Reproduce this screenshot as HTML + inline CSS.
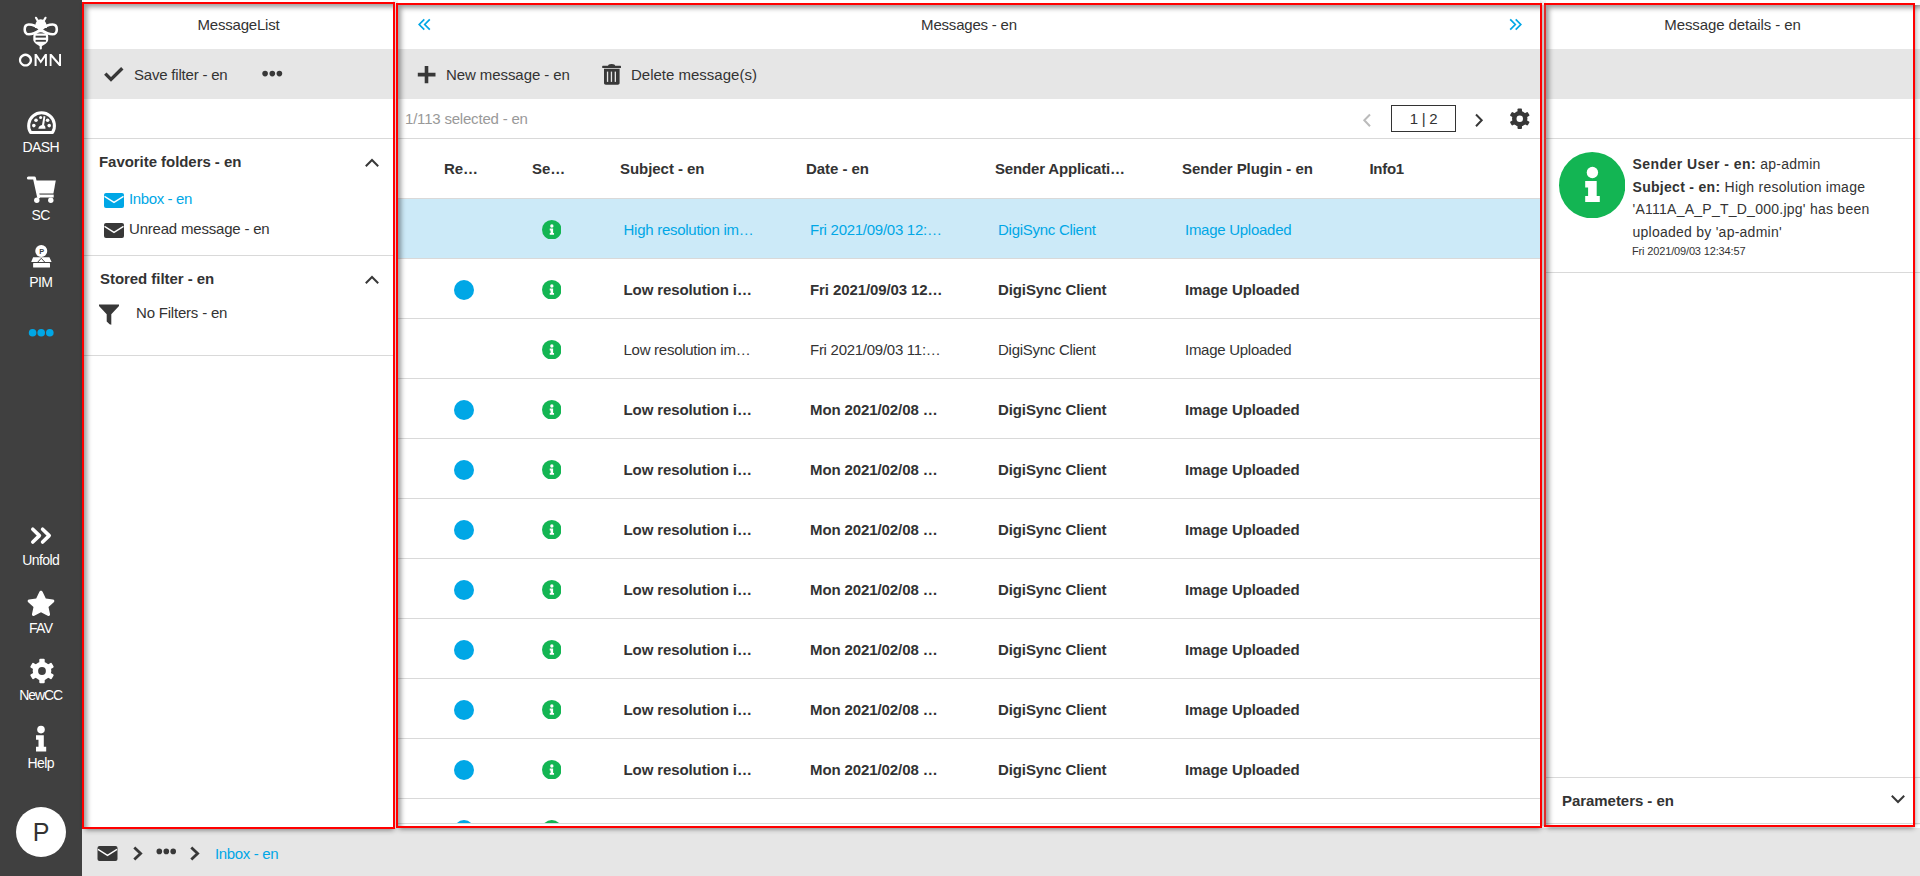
<!DOCTYPE html>
<html><head><meta charset="utf-8">
<style>
html,body{margin:0;padding:0;}
body{width:1920px;height:876px;position:relative;overflow:hidden;background:#fff;font-family:"Liberation Sans",sans-serif;color:#333;}
.a{position:absolute;display:block;}
.t{position:absolute;white-space:nowrap;font-size:15px;height:20px;line-height:20px;letter-spacing:-0.2px;}
.b{font-weight:bold;letter-spacing:-0.05px;}
.blue{color:#00a7e6;}
.lbl{position:absolute;left:0;width:82px;text-align:center;color:#fff;font-size:14px;line-height:20px;height:20px;white-space:nowrap;letter-spacing:-0.6px;text-indent:-0.6px;}
.panel{position:absolute;background:#fff;overflow:hidden;}
.shadow{position:absolute;box-shadow:1px 3px 5px rgba(0,0,0,.48);}
.insT{position:absolute;height:9px;background:linear-gradient(to bottom,rgba(0,0,0,.29) 0px,rgba(0,0,0,.26) 1px,rgba(0,0,0,.2) 2px,rgba(0,0,0,.14) 3px,rgba(0,0,0,.09) 4px,rgba(0,0,0,.05) 5px,rgba(0,0,0,.02) 6px,rgba(0,0,0,.005) 7px,rgba(0,0,0,0) 8px);}
.insL{position:absolute;width:9px;background:linear-gradient(to right,rgba(0,0,0,.31) 0px,rgba(0,0,0,.29) 1px,rgba(0,0,0,.23) 2px,rgba(0,0,0,.16) 3px,rgba(0,0,0,.105) 4px,rgba(0,0,0,.06) 5px,rgba(0,0,0,.028) 6px,rgba(0,0,0,.008) 7px,rgba(0,0,0,0) 8px);}
.ins{position:absolute;box-shadow:inset 3px 3px 5px rgba(0,0,0,.39);}
.tool{position:absolute;background:#e6e6e6;height:50px;top:49px;}
.hl{position:absolute;height:1px;background:#d9d9d9;}
.red{position:absolute;border:2px solid #f00;box-sizing:border-box;}
.dot{position:absolute;width:20px;height:20px;border-radius:50%;background:#00a7e6;}
</style></head>
<body>
<div class="a" style="left:0;top:0;width:82px;height:876px;background:#404040;"></div>
<div class="a" style="left:82px;top:828px;width:1838px;height:48px;background:#e6e6e6;"></div>

<svg class="a" style="left:0;top:0" width="82" height="876" viewBox="0 0 82 876">
<g fill="none" stroke="#fff">
  <path d="M36 17.8 L37.7 20.8 M45.5 17.8 L43.8 20.8" stroke-width="2.2" stroke-linecap="round"/>
  <path d="M40.75 29.6 C36 25.6 31.5 24.5 28.8 24.5 C25.8 24.5 24.7 27 24.7 29.4 C24.7 32 26.2 34.3 29 34.3 C32 34.3 36 32.6 40.75 29.6 C45.5 32.6 49.5 34.3 52.5 34.3 C55.3 34.3 56.8 32 56.8 29.4 C56.8 27 55.7 24.5 52.7 24.5 C50 24.5 45.5 25.6 40.75 29.6 Z" stroke-width="2.6"/>
 </g>
 <path d="M35 28 C35 22.5 37.5 19.3 40.75 19.3 C44 19.3 46.9 22.5 46.9 28 Z" fill="#fff"/>
 <path d="M40.75 30 C36.5 31 33.3 33 33.3 36.5 V39.5 C33.3 42.8 37.5 45 40.75 46.5 C44 45 48.2 42.8 48.2 39.5 V36.5 C48.2 33 45 31 40.75 30 Z" fill="#fff"/>
 <path d="M40.75 32.3 C38.5 32.8 37 33.3 36.5 33.6 H45 C44.5 33.3 43 32.8 40.75 32.3 Z" fill="#404040"/>
 <rect x="35.6" y="35.7" width="10.3" height="1.9" fill="#404040"/>
 <rect x="35.6" y="39.9" width="10.3" height="1.8" fill="#404040"/>
 <path d="M40.75 45 V48.5" stroke="#fff" stroke-width="2.2" stroke-linecap="round"/>
 <g fill="#fff">
  <path fill-rule="evenodd" d="M25.5 53.6 A6.6 6.5 0 1 1 25.49 53.6 Z M25.4 56.1 A4.3 4.05 0 1 0 25.41 56.1 Z"/>
  <path d="M34.6 66.1 V53.9 H36.6 L40.75 60.3 L45 53.9 H46.9 V66.1 H45 V57.4 L40.75 63.4 L36.6 57.4 V66.1 Z"/>
  <path d="M49.7 66.1 V53.9 H51.5 L59.1 62.8 V53.9 H61 V66.1 H59.2 L51.5 57.2 V66.1 Z"/>
 </g>

<path d="M30.55 132.4 A12.9 12.9 0 1 1 52.55 132.4 Z" fill="none" stroke="#fff" stroke-width="3" stroke-linejoin="round"/>
 <circle cx="33.8" cy="125.6" r="1.8" fill="#fff"/><circle cx="36" cy="120.2" r="1.8" fill="#fff"/>
 <circle cx="47.6" cy="120.2" r="1.8" fill="#fff"/><circle cx="49.2" cy="125.6" r="1.8" fill="#fff"/>
 <circle cx="40.6" cy="117.6" r="1.5" fill="#fff"/>
 <path d="M43.6 116 L45.4 116.5 L44.1 125.2 C45.1 125.8 45.5 127 45.5 128.8 L38.3 128.8 C38.5 126.8 40 125.4 42 125 Z" fill="#fff"/>

<path d="M28.4 178 H34.4 L38.6 197" fill="none" stroke="#fff" stroke-width="3" stroke-linecap="round" stroke-linejoin="round"/>
 <path d="M35.2 180.6 H55.8 L53.4 193.6 H38 Z" fill="#fff"/>
 <rect x="38.4" y="194.6" width="15.3" height="2.9" fill="#fff"/>
 <circle cx="36.8" cy="200.2" r="2.7" fill="#fff"/><circle cx="50.8" cy="200.2" r="2.7" fill="#fff"/>

<circle cx="41.25" cy="251.1" r="6" fill="#fff"/>
 <text x="41.7" y="254.2" font-family="Liberation Sans" font-size="7.4" font-weight="bold" fill="#404040" text-anchor="middle">P</text>
 <path d="M33.1 257.3 H49.4 L51.6 262.1 H31.2 Z" fill="#fff"/>
 <rect x="33.1" y="263.1" width="16.9" height="4.5" rx="0.6" fill="#fff"/>
 <path d="M37.3 262.6 L41.25 258.3 L45.2 262.6" fill="none" stroke="#404040" stroke-width="1"/>

<circle cx="32.6" cy="332.8" r="3.8" fill="#00a7e6"/><circle cx="41.2" cy="332.8" r="3.8" fill="#00a7e6"/><circle cx="49.8" cy="332.8" r="3.8" fill="#00a7e6"/>
<path d="M32.8 529.2 L39.4 535.6 L32.8 542 M42.6 529.2 L49.2 535.6 L42.6 542" fill="none" stroke="#fff" stroke-width="3.6" stroke-linecap="round" stroke-linejoin="round"/>
<path transform="translate(27,590)" d="M14 0.8 C14.8 0.8 15.3 1.3 15.7 2.1 L18.8 8.6 L25.9 9.5 C27.4 9.7 27.8 11.2 26.8 12.2 L21.5 17 L23 24.1 C23.3 25.6 22 26.5 20.7 25.8 L14 22.2 L7.3 25.8 C6 26.5 4.7 25.6 5 24.1 L6.5 17 L1.2 12.2 C0.2 11.2 0.6 9.7 2.1 9.5 L9.2 8.6 L12.3 2.1 C12.7 1.3 13.2 0.8 14 0.8 Z" fill="#fff"/>
<circle cx="41" cy="729.6" r="3.8" fill="#fff"/><path d="M36 735.2 H43.8 V746.8 H46.2 V751.4 H36 V746.8 H38.5 V739.8 H36 Z" fill="#fff"/>
</svg>
<div class="lbl" style="top:137px;">DASH</div>
<div class="lbl" style="top:205px;">SC</div>
<div class="lbl" style="top:272px;">PIM</div>
<div class="lbl" style="top:550px;">Unfold</div>
<div class="lbl" style="top:618px;">FAV</div>
<svg class="a" style="left:28.5px;top:657.5px" width="26" height="26" viewBox="0 0 24 24"><g fill="#fff"><circle cx="12" cy="12" r="8.6"/><rect x="9.5" y="0.6" width="5" height="5" rx="1" transform="rotate(0 12 12)"/><rect x="9.5" y="0.6" width="5" height="5" rx="1" transform="rotate(60 12 12)"/><rect x="9.5" y="0.6" width="5" height="5" rx="1" transform="rotate(120 12 12)"/><rect x="9.5" y="0.6" width="5" height="5" rx="1" transform="rotate(180 12 12)"/><rect x="9.5" y="0.6" width="5" height="5" rx="1" transform="rotate(240 12 12)"/><rect x="9.5" y="0.6" width="5" height="5" rx="1" transform="rotate(300 12 12)"/></g><circle cx="12" cy="12" r="3.6" fill="#404040"/></svg>
<div class="lbl" style="top:685px;letter-spacing:-1.1px;">NewCC</div>
<div class="lbl" style="top:753px;">Help</div>
<div class="a" style="left:15.7px;top:806.8px;width:50px;height:50px;border-radius:50%;background:#fff;"></div>
<div class="a" style="left:16px;top:817px;width:50px;height:30px;line-height:30px;text-align:center;font-size:25px;color:#333;">P</div>
<div class="shadow" style="left:84px;top:0px;width:309px;height:827px;"></div>
<div class="shadow" style="left:398px;top:0px;width:1142px;height:826px;"></div>
<div class="shadow" style="left:1546px;top:0px;width:367px;height:825px;"></div>
<div class="panel" style="left:84px;top:0px;width:309px;height:827px;">
<div class="a" style="left:-84px;top:0px;width:1920px;height:876px;">
<div class="t" style="left:84px;width:309px;text-align:center;top:14.5px;">MessageList</div>
<div class="tool" style="left:84px;width:309px;"></div>
<svg class="a" style="left:102px;top:66px" width="23" height="17" viewBox="0 0 23 17">
 <path d="M3.3 7.6 L9 13.4 L20.3 2.2" fill="none" stroke="#383838" stroke-width="3.4"/>
</svg>
<div class="t " style="left:134px;top:64.5px;">Save filter - en</div>
<svg class="a" style="left:261px;top:70px" width="23" height="8" viewBox="0 0 23 8">
 <circle cx="4.1" cy="3.6" r="2.8" fill="#383838"/><circle cx="11.3" cy="3.6" r="2.8" fill="#383838"/><circle cx="18.4" cy="3.6" r="2.8" fill="#383838"/>
</svg>
<div class="hl" style="left:84px;width:309px;top:138px;"></div>
<div class="t b" style="left:99px;top:151.6px;">Favorite folders - en</div>
<svg class="a" style="left:363.5px;top:158px" width="16" height="10" viewBox="0 0 16 10"><path d="M1.8 8.2 L8 2 L14.2 8.2" fill="none" stroke="#383838" stroke-width="2"/></svg>
<svg class="a" style="left:104px;top:193px" width="20" height="15" viewBox="0 0 20 15"><rect x="0" y="0" width="20" height="15" rx="2" fill="#00a7e6"/><path d="M0.5 3.4 L10 9.4 L19.5 3.4" fill="none" stroke="#fff" stroke-width="1.3"/></svg>
<div class="t blue" style="left:129px;top:188.7px;letter-spacing:-0.38px;">Inbox - en</div>
<svg class="a" style="left:104px;top:223px" width="20" height="15" viewBox="0 0 20 15"><rect x="0" y="0" width="20" height="15" rx="2" fill="#383838"/><path d="M0.5 3.4 L10 9.4 L19.5 3.4" fill="none" stroke="#fff" stroke-width="1.3"/></svg>
<div class="t " style="left:129px;top:218.7px;">Unread message - en</div>
<div class="hl" style="left:84px;width:309px;top:255px;"></div>
<div class="t b" style="left:100px;top:268.9px;">Stored filter - en</div>
<svg class="a" style="left:363.5px;top:274.5px" width="16" height="10" viewBox="0 0 16 10"><path d="M1.8 8.2 L8 2 L14.2 8.2" fill="none" stroke="#383838" stroke-width="2"/></svg>
<svg class="a" style="left:98px;top:303px" width="22" height="23" viewBox="0 0 22 23">
 <path d="M1 1.5 H21 V3 L13.3 11.2 V21.8 L11.6 21.2 L8.7 18.6 V11.2 L1 3 Z" fill="#383838"/>
</svg>
<div class="t " style="left:136px;top:302.5px;">No Filters - en</div>
<div class="hl" style="left:84px;width:309px;top:355px;"></div>
<div class="ins" style="left:84px;top:4px;width:321px;height:835px;"></div>
</div></div>
<div class="panel" style="left:398px;top:0px;width:1142px;height:826px;">
<div class="a" style="left:-398px;top:0px;width:1920px;height:876px;">
<svg class="a" style="left:417px;top:18px" width="15" height="13" viewBox="0 0 15 13">
 <path d="M7.3 1.3 L2.2 6.5 L7.3 11.7 M12.8 1.3 L7.7 6.5 L12.8 11.7" fill="none" stroke="#00a7e6" stroke-width="1.7"/>
</svg>
<div class="t" style="left:398px;width:1142px;text-align:center;top:14.6px;">Messages - en</div>
<svg class="a" style="left:1508px;top:18px" width="15" height="13" viewBox="0 0 15 13">
 <path d="M2.2 1.3 L7.3 6.5 L2.2 11.7 M7.7 1.3 L12.8 6.5 L7.7 11.7" fill="none" stroke="#00a7e6" stroke-width="1.7"/>
</svg>
<div class="tool" style="left:398px;width:1142px;"></div>
<svg class="a" style="left:417px;top:65px" width="19" height="19" viewBox="0 0 19 19">
 <path d="M9.5 1 V18.3 M0.8 9.6 H18.5" fill="none" stroke="#383838" stroke-width="3.6"/>
</svg>
<div class="t " style="left:446px;top:64.5px;letter-spacing:-0.08px;">New message - en</div>
<svg class="a" style="left:600px;top:62px" width="24" height="25" viewBox="600 62 24 25">
 <path d="M608 66.3 C608 64.7 609.2 63.9 611.6 63.9 C614 63.9 615.2 64.7 615.2 66.3 Z" fill="#383838"/>
 <rect x="602.2" y="65.8" width="18.8" height="2.2" rx="0.6" fill="#383838"/>
 <path d="M604 68.8 H619.6 V83 C619.6 84 618.8 84.7 617.8 84.7 H605.8 C604.8 84.7 604 84 604 83 Z" fill="#383838"/>
 <rect x="606.9" y="71.6" width="1.3" height="10.3" fill="#e6e6e6"/><rect x="610.8" y="71.6" width="1.3" height="10.3" fill="#e6e6e6"/><rect x="614.7" y="71.6" width="1.3" height="10.3" fill="#e6e6e6"/>
</svg>
<div class="t " style="left:631px;top:64.5px;letter-spacing:0px;">Delete message(s)</div>
<div class="t " style="left:405px;top:108.5px;color:#999;">1/113 selected - en</div>
<svg class="a" style="left:1361px;top:113px" width="12" height="15" viewBox="0 0 12 15">
 <path d="M9 1.5 L3.3 7.3 L9 13.2" fill="none" stroke="#bbb" stroke-width="2"/>
</svg>
<div class="a" style="left:1391px;top:105px;width:63px;height:25px;border:1px solid #333;"></div>
<div class="t" style="left:1391px;width:65px;text-align:center;top:108.9px;letter-spacing:-0.3px;">1 | 2</div>
<svg class="a" style="left:1473px;top:113px" width="12" height="15" viewBox="0 0 12 15">
 <path d="M3 1.5 L8.7 7.3 L3 13.2" fill="none" stroke="#383838" stroke-width="2"/>
</svg>
<svg class="a" style="left:1508.5px;top:107.5px" width="21.5" height="21.5" viewBox="0 0 24 24"><g fill="#383838"><circle cx="12" cy="12" r="8.6"/><rect x="9.5" y="0.6" width="5" height="5" rx="1" transform="rotate(0 12 12)"/><rect x="9.5" y="0.6" width="5" height="5" rx="1" transform="rotate(60 12 12)"/><rect x="9.5" y="0.6" width="5" height="5" rx="1" transform="rotate(120 12 12)"/><rect x="9.5" y="0.6" width="5" height="5" rx="1" transform="rotate(180 12 12)"/><rect x="9.5" y="0.6" width="5" height="5" rx="1" transform="rotate(240 12 12)"/><rect x="9.5" y="0.6" width="5" height="5" rx="1" transform="rotate(300 12 12)"/></g><circle cx="12" cy="12" r="3.6" fill="#fff"/></svg>
<div class="hl" style="left:398px;width:1142px;top:138px;"></div>
<div class="t b" style="left:444px;top:158.7px;">Re…</div>
<div class="t b" style="left:532px;top:158.7px;">Se…</div>
<div class="t b" style="left:620px;top:158.7px;">Subject - en</div>
<div class="t b" style="left:806px;top:158.7px;">Date - en</div>
<div class="t b" style="left:995px;top:158.7px;letter-spacing:-0.17px;">Sender Applicati…</div>
<div class="t b" style="left:1182px;top:158.7px;">Sender Plugin - en</div>
<div class="t b" style="left:1369.5px;top:158.7px;letter-spacing:-0.3px;">Info1</div>
<div class="hl" style="left:398px;width:1142px;top:198px;"></div>
<div class="a" style="left:398px;top:199px;width:1142px;height:59px;background:#cceaf8;"></div>
<div class="hl" style="left:398px;width:1142px;top:258px;"></div>
<svg class="a" style="left:541.50px;top:219.60px" width="19.6" height="19.6" viewBox="0 0 66.4 66.4"><circle cx="33.2" cy="33.2" r="33.2" fill="#13b553"/><circle cx="33.4" cy="20.5" r="5.7" fill="#fff"/><path d="M26.2 29 H37.7 V43.9 H40.8 V49.9 H26.2 V43.9 H29.1 V35.6 H26.2 Z" fill="#fff"/></svg>
<div class="t blue" style="left:623.5px;top:219.5px;letter-spacing:-0.27px;">High resolution im…</div>
<div class="t blue" style="left:810px;top:219.5px;letter-spacing:-0.27px;">Fri 2021/09/03 12:…</div>
<div class="t blue" style="left:998px;top:219.5px;letter-spacing:-0.27px;">DigiSync Client</div>
<div class="t blue" style="left:1185px;top:219.5px;letter-spacing:-0.27px;">Image Uploaded</div>
<div class="hl" style="left:398px;width:1142px;top:318px;"></div>
<div class="dot" style="left:454px;top:279.5px;"></div>
<svg class="a" style="left:541.50px;top:279.60px" width="19.6" height="19.6" viewBox="0 0 66.4 66.4"><circle cx="33.2" cy="33.2" r="33.2" fill="#13b553"/><circle cx="33.4" cy="20.5" r="5.7" fill="#fff"/><path d="M26.2 29 H37.7 V43.9 H40.8 V49.9 H26.2 V43.9 H29.1 V35.6 H26.2 Z" fill="#fff"/></svg>
<div class="t b" style="left:623.5px;top:279.5px;letter-spacing:-0.1px;">Low resolution i…</div>
<div class="t b" style="left:810px;top:279.5px;letter-spacing:-0.1px;">Fri 2021/09/03 12…</div>
<div class="t b" style="left:998px;top:279.5px;letter-spacing:-0.1px;">DigiSync Client</div>
<div class="t b" style="left:1185px;top:279.5px;letter-spacing:-0.1px;">Image Uploaded</div>
<div class="hl" style="left:398px;width:1142px;top:378px;"></div>
<svg class="a" style="left:541.50px;top:339.60px" width="19.6" height="19.6" viewBox="0 0 66.4 66.4"><circle cx="33.2" cy="33.2" r="33.2" fill="#13b553"/><circle cx="33.4" cy="20.5" r="5.7" fill="#fff"/><path d="M26.2 29 H37.7 V43.9 H40.8 V49.9 H26.2 V43.9 H29.1 V35.6 H26.2 Z" fill="#fff"/></svg>
<div class="t " style="left:623.5px;top:339.5px;letter-spacing:-0.27px;">Low resolution im…</div>
<div class="t " style="left:810px;top:339.5px;letter-spacing:-0.27px;">Fri 2021/09/03 11:…</div>
<div class="t " style="left:998px;top:339.5px;letter-spacing:-0.27px;">DigiSync Client</div>
<div class="t " style="left:1185px;top:339.5px;letter-spacing:-0.27px;">Image Uploaded</div>
<div class="hl" style="left:398px;width:1142px;top:438px;"></div>
<div class="dot" style="left:454px;top:399.5px;"></div>
<svg class="a" style="left:541.50px;top:399.60px" width="19.6" height="19.6" viewBox="0 0 66.4 66.4"><circle cx="33.2" cy="33.2" r="33.2" fill="#13b553"/><circle cx="33.4" cy="20.5" r="5.7" fill="#fff"/><path d="M26.2 29 H37.7 V43.9 H40.8 V49.9 H26.2 V43.9 H29.1 V35.6 H26.2 Z" fill="#fff"/></svg>
<div class="t b" style="left:623.5px;top:399.5px;letter-spacing:-0.1px;">Low resolution i…</div>
<div class="t b" style="left:810px;top:399.5px;letter-spacing:-0.1px;">Mon 2021/02/08 …</div>
<div class="t b" style="left:998px;top:399.5px;letter-spacing:-0.1px;">DigiSync Client</div>
<div class="t b" style="left:1185px;top:399.5px;letter-spacing:-0.1px;">Image Uploaded</div>
<div class="hl" style="left:398px;width:1142px;top:498px;"></div>
<div class="dot" style="left:454px;top:459.5px;"></div>
<svg class="a" style="left:541.50px;top:459.60px" width="19.6" height="19.6" viewBox="0 0 66.4 66.4"><circle cx="33.2" cy="33.2" r="33.2" fill="#13b553"/><circle cx="33.4" cy="20.5" r="5.7" fill="#fff"/><path d="M26.2 29 H37.7 V43.9 H40.8 V49.9 H26.2 V43.9 H29.1 V35.6 H26.2 Z" fill="#fff"/></svg>
<div class="t b" style="left:623.5px;top:459.5px;letter-spacing:-0.1px;">Low resolution i…</div>
<div class="t b" style="left:810px;top:459.5px;letter-spacing:-0.1px;">Mon 2021/02/08 …</div>
<div class="t b" style="left:998px;top:459.5px;letter-spacing:-0.1px;">DigiSync Client</div>
<div class="t b" style="left:1185px;top:459.5px;letter-spacing:-0.1px;">Image Uploaded</div>
<div class="hl" style="left:398px;width:1142px;top:558px;"></div>
<div class="dot" style="left:454px;top:519.5px;"></div>
<svg class="a" style="left:541.50px;top:519.60px" width="19.6" height="19.6" viewBox="0 0 66.4 66.4"><circle cx="33.2" cy="33.2" r="33.2" fill="#13b553"/><circle cx="33.4" cy="20.5" r="5.7" fill="#fff"/><path d="M26.2 29 H37.7 V43.9 H40.8 V49.9 H26.2 V43.9 H29.1 V35.6 H26.2 Z" fill="#fff"/></svg>
<div class="t b" style="left:623.5px;top:519.5px;letter-spacing:-0.1px;">Low resolution i…</div>
<div class="t b" style="left:810px;top:519.5px;letter-spacing:-0.1px;">Mon 2021/02/08 …</div>
<div class="t b" style="left:998px;top:519.5px;letter-spacing:-0.1px;">DigiSync Client</div>
<div class="t b" style="left:1185px;top:519.5px;letter-spacing:-0.1px;">Image Uploaded</div>
<div class="hl" style="left:398px;width:1142px;top:618px;"></div>
<div class="dot" style="left:454px;top:579.5px;"></div>
<svg class="a" style="left:541.50px;top:579.60px" width="19.6" height="19.6" viewBox="0 0 66.4 66.4"><circle cx="33.2" cy="33.2" r="33.2" fill="#13b553"/><circle cx="33.4" cy="20.5" r="5.7" fill="#fff"/><path d="M26.2 29 H37.7 V43.9 H40.8 V49.9 H26.2 V43.9 H29.1 V35.6 H26.2 Z" fill="#fff"/></svg>
<div class="t b" style="left:623.5px;top:579.5px;letter-spacing:-0.1px;">Low resolution i…</div>
<div class="t b" style="left:810px;top:579.5px;letter-spacing:-0.1px;">Mon 2021/02/08 …</div>
<div class="t b" style="left:998px;top:579.5px;letter-spacing:-0.1px;">DigiSync Client</div>
<div class="t b" style="left:1185px;top:579.5px;letter-spacing:-0.1px;">Image Uploaded</div>
<div class="hl" style="left:398px;width:1142px;top:678px;"></div>
<div class="dot" style="left:454px;top:639.5px;"></div>
<svg class="a" style="left:541.50px;top:639.60px" width="19.6" height="19.6" viewBox="0 0 66.4 66.4"><circle cx="33.2" cy="33.2" r="33.2" fill="#13b553"/><circle cx="33.4" cy="20.5" r="5.7" fill="#fff"/><path d="M26.2 29 H37.7 V43.9 H40.8 V49.9 H26.2 V43.9 H29.1 V35.6 H26.2 Z" fill="#fff"/></svg>
<div class="t b" style="left:623.5px;top:639.5px;letter-spacing:-0.1px;">Low resolution i…</div>
<div class="t b" style="left:810px;top:639.5px;letter-spacing:-0.1px;">Mon 2021/02/08 …</div>
<div class="t b" style="left:998px;top:639.5px;letter-spacing:-0.1px;">DigiSync Client</div>
<div class="t b" style="left:1185px;top:639.5px;letter-spacing:-0.1px;">Image Uploaded</div>
<div class="hl" style="left:398px;width:1142px;top:738px;"></div>
<div class="dot" style="left:454px;top:699.5px;"></div>
<svg class="a" style="left:541.50px;top:699.60px" width="19.6" height="19.6" viewBox="0 0 66.4 66.4"><circle cx="33.2" cy="33.2" r="33.2" fill="#13b553"/><circle cx="33.4" cy="20.5" r="5.7" fill="#fff"/><path d="M26.2 29 H37.7 V43.9 H40.8 V49.9 H26.2 V43.9 H29.1 V35.6 H26.2 Z" fill="#fff"/></svg>
<div class="t b" style="left:623.5px;top:699.5px;letter-spacing:-0.1px;">Low resolution i…</div>
<div class="t b" style="left:810px;top:699.5px;letter-spacing:-0.1px;">Mon 2021/02/08 …</div>
<div class="t b" style="left:998px;top:699.5px;letter-spacing:-0.1px;">DigiSync Client</div>
<div class="t b" style="left:1185px;top:699.5px;letter-spacing:-0.1px;">Image Uploaded</div>
<div class="hl" style="left:398px;width:1142px;top:798px;"></div>
<div class="dot" style="left:454px;top:759.5px;"></div>
<svg class="a" style="left:541.50px;top:759.60px" width="19.6" height="19.6" viewBox="0 0 66.4 66.4"><circle cx="33.2" cy="33.2" r="33.2" fill="#13b553"/><circle cx="33.4" cy="20.5" r="5.7" fill="#fff"/><path d="M26.2 29 H37.7 V43.9 H40.8 V49.9 H26.2 V43.9 H29.1 V35.6 H26.2 Z" fill="#fff"/></svg>
<div class="t b" style="left:623.5px;top:759.5px;letter-spacing:-0.1px;">Low resolution i…</div>
<div class="t b" style="left:810px;top:759.5px;letter-spacing:-0.1px;">Mon 2021/02/08 …</div>
<div class="t b" style="left:998px;top:759.5px;letter-spacing:-0.1px;">DigiSync Client</div>
<div class="t b" style="left:1185px;top:759.5px;letter-spacing:-0.1px;">Image Uploaded</div>
<div class="hl" style="left:398px;width:1142px;top:858px;"></div>
<div class="dot" style="left:454px;top:819.5px;"></div>
<svg class="a" style="left:541.50px;top:819.60px" width="19.6" height="19.6" viewBox="0 0 66.4 66.4"><circle cx="33.2" cy="33.2" r="33.2" fill="#13b553"/><circle cx="33.4" cy="20.5" r="5.7" fill="#fff"/><path d="M26.2 29 H37.7 V43.9 H40.8 V49.9 H26.2 V43.9 H29.1 V35.6 H26.2 Z" fill="#fff"/></svg>
<div class="t b" style="left:623.5px;top:819.5px;letter-spacing:-0.1px;">Low resolution i…</div>
<div class="t b" style="left:810px;top:819.5px;letter-spacing:-0.1px;">Mon 2021/02/08 …</div>
<div class="t b" style="left:998px;top:819.5px;letter-spacing:-0.1px;">DigiSync Client</div>
<div class="t b" style="left:1185px;top:819.5px;letter-spacing:-0.1px;">Image Uploaded</div>
<div class="a" style="left:398px;top:823px;width:1142px;height:3px;background:#fff;"></div>
<div class="hl" style="left:398px;width:1142px;top:823px;"></div>
<div class="ins" style="left:398px;top:5px;width:1154px;height:833px;"></div>
</div></div>
<div class="panel" style="left:1546px;top:0px;width:374px;height:825px;">
<div class="a" style="left:-1546px;top:0px;width:1920px;height:876px;">
<div class="t" style="left:1549px;width:367px;text-align:center;top:14.6px;letter-spacing:-0.1px;">Message details - en</div>
<div class="tool" style="left:1546px;width:374px;"></div>
<div class="hl" style="left:1546px;width:374px;top:138px;"></div>
<svg class="a" style="left:1558.90px;top:152.10px" width="66.4" height="66.4" viewBox="0 0 66.4 66.4"><circle cx="33.2" cy="33.2" r="33.2" fill="#13b553"/><circle cx="33.4" cy="20.5" r="5.7" fill="#fff"/><path d="M26.2 29 H37.7 V43.9 H40.8 V49.9 H26.2 V43.9 H29.1 V35.6 H26.2 Z" fill="#fff"/></svg>
<div class="a" style="left:1632.5px;top:153px;font-size:14px;line-height:22.6px;width:290px;letter-spacing:0.25px;white-space:nowrap;"><b style="letter-spacing:0.45px">Sender User - en:</b> ap-admin<br><b style="letter-spacing:0.3px">Subject - en:</b> High resolution image<br>'A111A_A_P_T_D_000.jpg' has been<br>uploaded by 'ap-admin'</div>
<div class="a" style="left:1632px;top:243px;font-size:11px;line-height:16px;white-space:nowrap;letter-spacing:-0.15px;">Fri 2021/09/03 12:34:57</div>
<div class="hl" style="left:1546px;width:374px;top:272px;"></div>
<div class="hl" style="left:1546px;width:374px;top:777px;"></div>
<div class="t b" style="left:1562px;top:790.5px;">Parameters - en</div>
<svg class="a" style="left:1890px;top:794px" width="16" height="10" viewBox="0 0 16 10">
 <path d="M1.8 1.8 L8 8 L14.2 1.8" fill="none" stroke="#383838" stroke-width="2"/>
</svg>
<div class="hl" style="left:1546px;width:374px;top:823px;"></div>
<div class="a" style="left:1915px;top:5px;width:5px;height:820px;background:linear-gradient(to right,rgba(0,0,0,.23),rgba(0,0,0,.13) 1.5px,rgba(0,0,0,.06) 3.5px,rgba(0,0,0,.03));"></div>
<div class="ins" style="left:1546px;top:5px;width:379px;height:832px;"></div>
</div></div>
<svg class="a" style="left:97px;top:846px" width="21" height="15" viewBox="0 0 20 15"><rect x="0" y="0" width="20" height="15" rx="2" fill="#383838"/><path d="M0.5 3.4 L10 9.4 L19.5 3.4" fill="none" stroke="#fff" stroke-width="1.3"/></svg>
<svg class="a" style="left:131.5px;top:845.8px" width="12" height="15" viewBox="0 0 12 15"><path d="M2.3 1.6 L8.6 7.5 L2.3 13.4" fill="none" stroke="#383838" stroke-width="2.8"/></svg>
<svg class="a" style="left:155px;top:848px" width="23" height="8" viewBox="0 0 23 8">
 <circle cx="4.3" cy="3.4" r="2.8" fill="#383838"/><circle cx="11.3" cy="3.4" r="2.8" fill="#383838"/><circle cx="18.2" cy="3.4" r="2.8" fill="#383838"/>
</svg>
<svg class="a" style="left:189px;top:845.8px" width="12" height="15" viewBox="0 0 12 15"><path d="M2.3 1.6 L8.6 7.5 L2.3 13.4" fill="none" stroke="#383838" stroke-width="2.8"/></svg>
<div class="t blue" style="left:215px;top:843.5px;letter-spacing:-0.35px;">Inbox - en</div>
<div class="red" style="left:82px;top:2px;width:313px;height:827px;"></div>
<div class="red" style="left:396px;top:3px;width:1146px;height:825px;"></div>
<div class="red" style="left:1544px;top:3px;width:371px;height:824px;"></div>
<div class="a" style="left:1542px;top:5px;width:2px;height:821px;background:rgba(0,0,0,.11);"></div>
<div class="a" style="left:1544px;top:5px;width:2px;height:820px;background:rgba(150,150,150,.3);"></div>
</body></html>
